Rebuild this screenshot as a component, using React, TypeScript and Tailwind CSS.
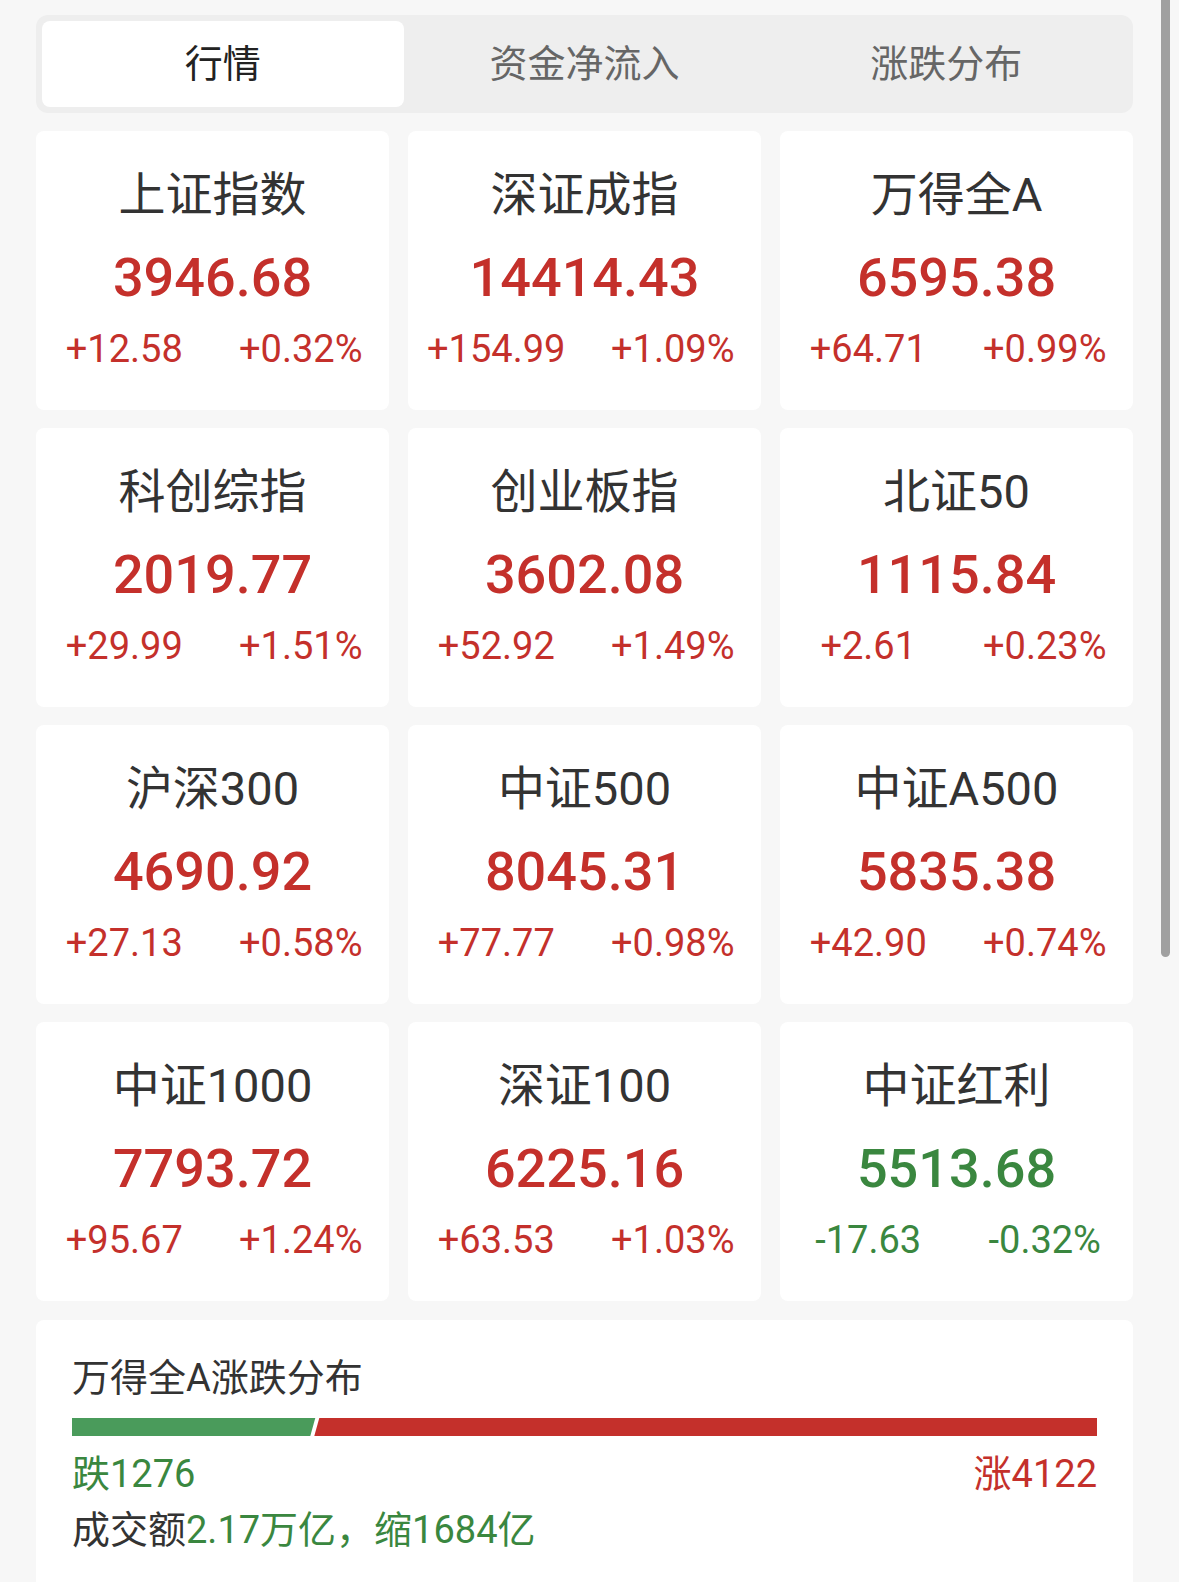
import React from "react";

type Item = { name: string; value: string; chg: string; pct: string; up: boolean };

const items: Item[] = [
  { name: "上证指数", value: "3946.68", chg: "+12.58", pct: "+0.32%", up: true },
  { name: "深证成指", value: "14414.43", chg: "+154.99", pct: "+1.09%", up: true },
  { name: "万得全A", value: "6595.38", chg: "+64.71", pct: "+0.99%", up: true },
  { name: "科创综指", value: "2019.77", chg: "+29.99", pct: "+1.51%", up: true },
  { name: "创业板指", value: "3602.08", chg: "+52.92", pct: "+1.49%", up: true },
  { name: "北证50", value: "1115.84", chg: "+2.61", pct: "+0.23%", up: true },
  { name: "沪深300", value: "4690.92", chg: "+27.13", pct: "+0.58%", up: true },
  { name: "中证500", value: "8045.31", chg: "+77.77", pct: "+0.98%", up: true },
  { name: "中证A500", value: "5835.38", chg: "+42.90", pct: "+0.74%", up: true },
  { name: "中证1000", value: "7793.72", chg: "+95.67", pct: "+1.24%", up: true },
  { name: "深证100", value: "6225.16", chg: "+63.53", pct: "+1.03%", up: true },
  { name: "中证红利", value: "5513.68", chg: "-17.63", pct: "-0.32%", up: false },
];

const tabs = ["行情", "资金净流入", "涨跌分布"];

function Card({ it }: { it: Item }) {
  const color = it.up ? "text-[#c4302b]" : "text-[#3a873f]";
  return (
    <div className="bg-white rounded-[8px] h-[279px] flex flex-col items-center">
      <div className="mt-[36px] h-[56px] leading-[56px] text-[47px] text-[#333333]">{it.name}</div>
      <div className={`mt-[23px] h-[64px] leading-[64px] text-[54px] font-medium ${color}`}>{it.value}</div>
      <div className={`mt-[15px] w-full grid grid-cols-2 h-[48px] leading-[48px] text-[38px] ${color}`}>
        <div className="text-center">{it.chg}</div>
        <div className="text-center">{it.pct}</div>
      </div>
    </div>
  );
}

export default function App() {
  const down = 1276;
  const up = 4122;
  const W = 1025;
  const gw = (down / (down + up)) * W;
  return (
    <div
      className="relative w-[1179px] h-[1582px] overflow-hidden bg-[#f7f7f7]"
      style={{ fontFamily: 'Roboto, "Noto Sans CJK SC", sans-serif' }}
    >
      <div className="pl-[36px] pt-[15px] w-[1133px]">
        <div className="bg-[#eeeeee] rounded-[12px] p-[6px] grid grid-cols-3 h-[98px]">
          {tabs.map((t, i) => (
            <div
              key={t}
              className={`flex items-center justify-center rounded-[8px] text-[38px] ${
                i === 0 ? "bg-white text-[#222222]" : "text-[#666666]"
              }`}
            >
              {t}
            </div>
          ))}
        </div>

        <div className="mt-[18px] grid grid-cols-3 gap-x-[19px] gap-y-[18px]">
          {items.map((it) => (
            <Card key={it.name} it={it} />
          ))}
        </div>

        <div className="mt-[19px] bg-white rounded-[8px] px-[36px] pt-[34px] pb-[60px]">
          <div className="h-[48px] leading-[48px] text-[38px] text-[#333333]">万得全A涨跌分布</div>
          <svg className="mt-[16px] block" width={W} height={18} viewBox={`0 0 ${W} 18`}>
            <polygon points={`0,0 ${gw + 1},0 ${gw - 4},18 0,18`} fill="#4a9b5b" />
            <polygon points={`${gw + 5},0 ${W},0 ${W},18 ${gw},18`} fill="#c4302b" />
          </svg>
          <div className="mt-[14px] flex justify-between h-[48px] leading-[48px] text-[38px]">
            <span className="text-[#3a873f]">跌{down}</span>
            <span className="text-[#c4302b]">涨{up}</span>
          </div>
          <div className="mt-[8px] h-[48px] leading-[48px] text-[38px] text-[#333333]">
            成交额<span className="text-[#3a873f]">2.17万亿，缩1684亿</span>
          </div>
        </div>
      </div>

      <div className="absolute left-[1161px] top-0 w-[9px] h-[957px] bg-[#a0a0a0] rounded-b-full" />
    </div>
  );
}
